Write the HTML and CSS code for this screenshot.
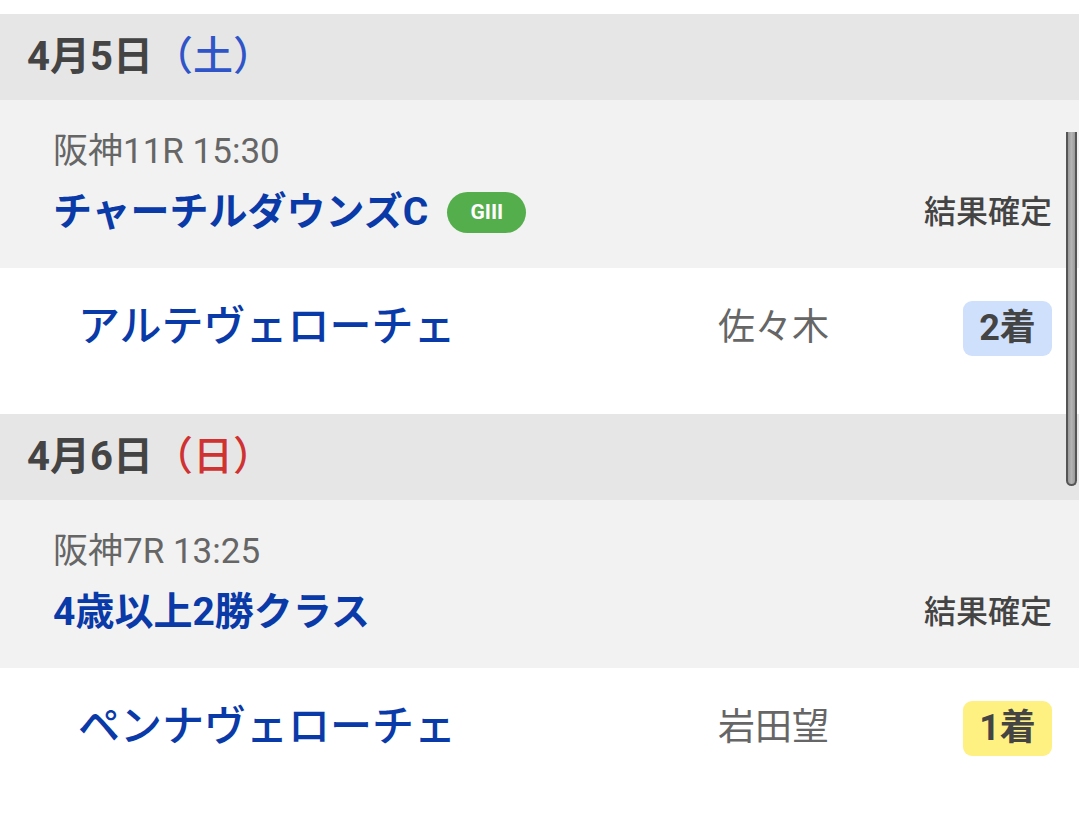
FILE: index.html
```html
<!DOCTYPE html>
<html lang="ja">
<head>
<meta charset="utf-8">
<title>出走結果</title>
<link rel="stylesheet" href="styles.css">
</head>
<body>
<div class="list">
  <div class="date-head"><span class="date">4月5日</span><span class="dow sat">（土）</span></div>
  <div class="race">
    <div class="race-info">
      <div class="meta">阪神11R 15:30</div>
      <div class="race-name">チャーチルダウンズC<span class="grade">GIII</span></div>
    </div>
    <div class="status">結果確定</div>
  </div>
  <div class="horse-row">
    <span class="horse">アルテヴェローチェ</span>
    <span class="jockey">佐々木</span>
    <span class="rank second">2着</span>
  </div>

  <div class="date-head"><span class="date">4月6日</span><span class="dow sun">（日）</span></div>
  <div class="race">
    <div class="race-info">
      <div class="meta">阪神7R 13:25</div>
      <div class="race-name">4歳以上2勝クラス</div>
    </div>
    <div class="status">結果確定</div>
  </div>
  <div class="horse-row">
    <span class="horse">ペンナヴェローチェ</span>
    <span class="jockey">岩田望</span>
    <span class="rank first">1着</span>
  </div>
</div>
<div class="scrollbar"></div>
</body>
</html>
```

FILE: styles.css
```css
html, body {
  margin: 0;
  padding: 0;
  background: #ffffff;
}
body {
  font-family: "Roboto", "Noto Sans CJK JP", sans-serif;
  padding-top: 14px;
}
.list {
  display: flex;
  flex-direction: column;
}
.date-head {
  height: 86px;
  background: #e6e6e6;
  display: flex;
  align-items: center;
  padding-left: 27px;
  font-size: 40px;
  line-height: 50px;
  font-weight: 700;
  color: #444444;
}
.dow { font-weight: 500; }
.dow.sat { color: #2f55c8; }
.dow.sun { color: #d03232; }

.race {
  background: #f2f2f2;
  display: flex;
  align-items: flex-end;
  justify-content: space-between;
  padding: 30px 27px 28px 53px;
}
.meta {
  font-size: 35px;
  line-height: 44px;
  color: #666666;
}
.race-name {
  margin-top: 10px;
  font-size: 39px;
  line-height: 56px;
  font-weight: 700;
  color: #0a3aa8;
  display: flex;
  align-items: center;
}
.grade {
  margin-left: 19px;
  width: 79px;
  height: 41px;
  border-radius: 21px;
  background: #55ae4c;
  color: #ffffff;
  font-size: 21px;
  line-height: 41px;
  font-weight: 700;
  display: flex;
  align-items: center;
  justify-content: center;
}
.status {
  font-size: 32px;
  line-height: 56px;
  color: #444444;
  font-weight: 500;
}

.horse-row {
  display: grid;
  grid-template-columns: 1fr 245px 89px;
  align-items: center;
  padding: 33px 27px 58px 80px;
  background: #ffffff;
  line-height: 55px;
}
.horse {
  font-size: 42px;
  font-weight: 500;
  color: #0a3aa8;
  margin-left: -2px;
  margin-top: -4px;
}
.jockey {
  font-size: 37px;
  color: #666666;
  margin-top: -2px;
}
.rank {
  height: 55px;
  border-radius: 9px;
  display: flex;
  align-items: center;
  justify-content: center;
  font-size: 36px;
  font-weight: 700;
  color: #444444;
}
.rank.second { background: #cfe0fc; }
.rank.first { background: #fff082; }

.scrollbar {
  position: fixed;
  top: 132px;
  right: 2px;
  width: 11px;
  height: 354px;
  box-sizing: border-box;
  border-left: 2px solid #555555;
  border-right: 2px solid #555555;
  border-bottom: 2px solid #555555;
  background: linear-gradient(to right, #9a9a9a, #b4b4b4 50%, #9a9a9a);
  border-radius: 0 0 6px 6px;
}
```
